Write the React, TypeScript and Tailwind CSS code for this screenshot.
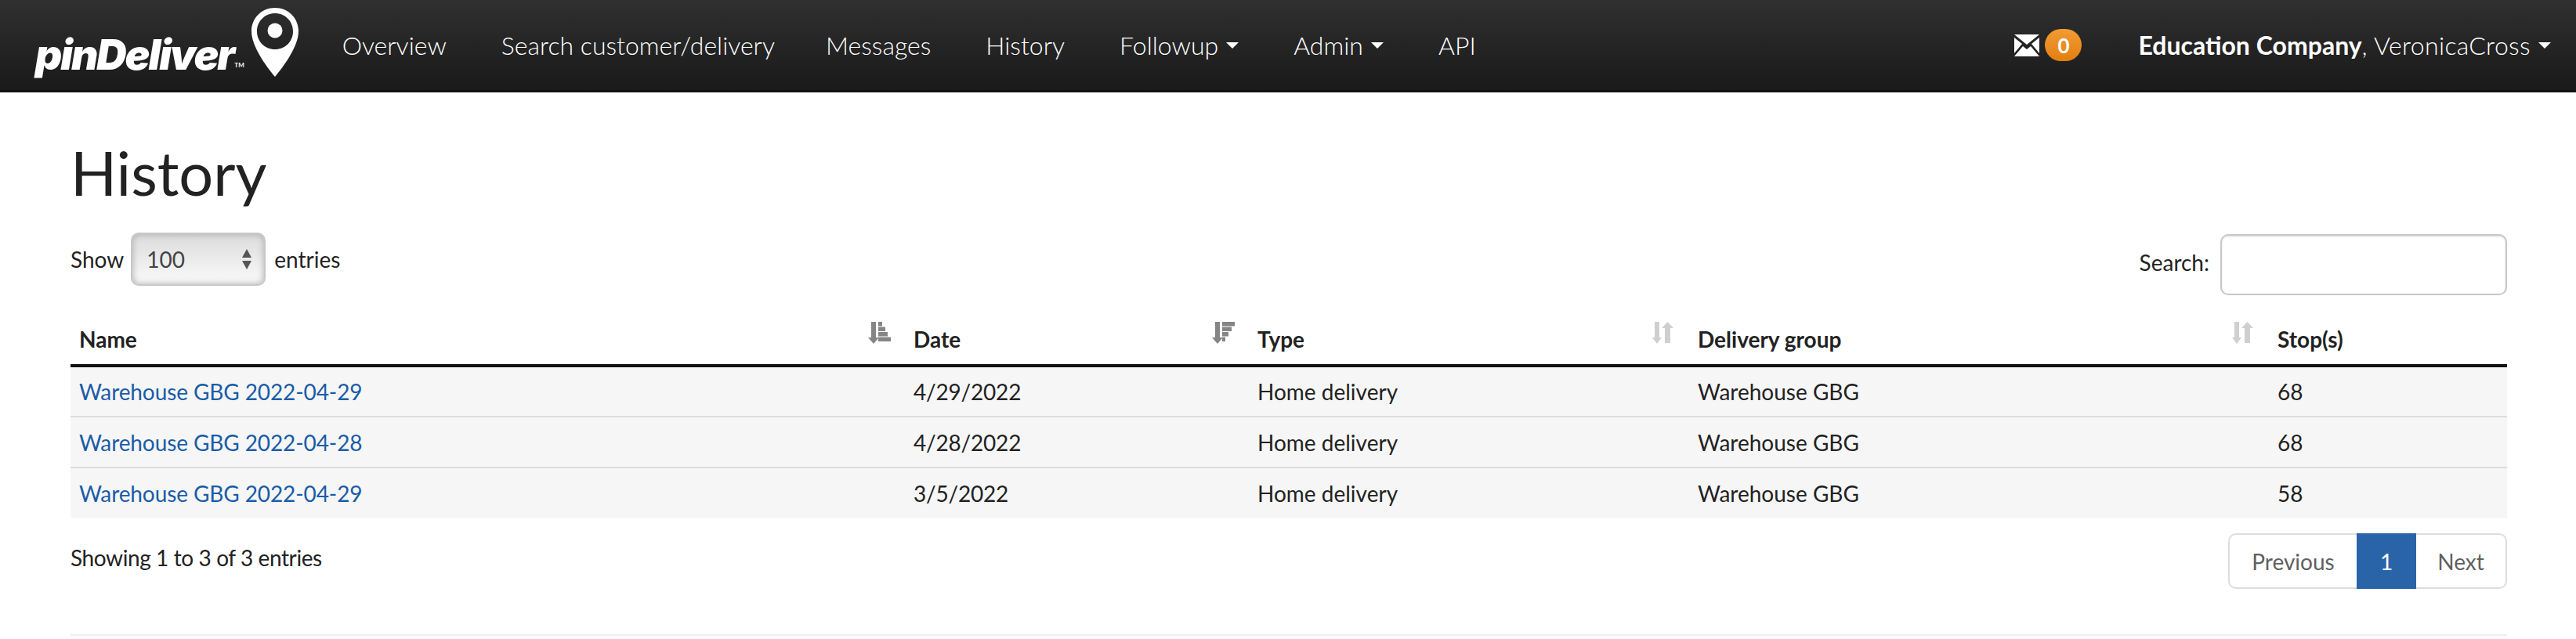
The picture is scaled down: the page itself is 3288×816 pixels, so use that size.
const LATO = "font-['Lato','Liberation_Sans',sans-serif]";

const rows = [
  { name: "Warehouse GBG 2022-04-29", date: "4/29/2022", type: "Home delivery", group: "Warehouse GBG", stops: "68" },
  { name: "Warehouse GBG 2022-04-28", date: "4/28/2022", type: "Home delivery", group: "Warehouse GBG", stops: "68" },
  { name: "Warehouse GBG 2022-04-29", date: "3/5/2022", type: "Home delivery", group: "Warehouse GBG", stops: "58" },
];

function Caret() {
  return <span className="ml-[10px] inline-block border-x-[8px] border-t-[8px] border-x-transparent border-t-white align-middle" />;
}

function NavLink({ label, caret, className = "" }: { label: string; caret?: boolean; className?: string }) {
  return (
    <a className={`flex items-center text-[32px] font-light text-white ${className}`}>
      {label}
      {caret && <Caret />}
    </a>
  );
}

function Pin() {
  return (
    <svg width="60" height="88" viewBox="0 0 60 88" className="shrink-0">
      <path
        fillRule="evenodd"
        fill="#fff"
        d="M30 0C13 0 0 13 0 30c0 19 19 45 30 58 11-13 30-39 30-58C60 13 47 0 30 0zm0 7c13 0 23 10 23 23S43 53 30 53 7 43 7 30 17 7 30 7z"
      />
      <circle cx="30" cy="29" r="9.5" fill="#fff" />
    </svg>
  );
}

function SortDesc({ flip }: { flip?: boolean }) {
  const bars = flip ? [16, 12, 8, 4] : [5, 9, 12, 16];
  return (
    <svg width="30" height="30" viewBox="0 0 30 30" fill="#858585">
      <path d="M5 1h6v20h4l-7 8-7-8h4z" />
      {bars.map((w, i) => (
        <rect key={i} x="14" y={1 + i * 6.500} width={w} height="5.500" />
      ))}
    </svg>
  );
}

function SortBoth() {
  return (
    <svg width="30" height="30" viewBox="0 0 30 30" fill="#cfcfcf">
      <path d="M4 1h6v20h3l-6 8-6-8h3z" />
      <path d="M17 28h7V9h4l-7.500-8L13 9h4z" />
    </svg>
  );
}

function Th({ label, width, icon }: { label: string; width: string; icon?: React.ReactNode }) {
  return (
    <th className={`${width} p-0 text-left align-top font-bold`}>
      <div className="flex h-[77px] items-start justify-between pl-[11px] pr-[18px]">
        <span className="mt-[25px] leading-[40px]">{label}</span>
        <span className="mt-[22px]">{icon}</span>
      </div>
    </th>
  );
}

export default function App() {
  return (
    <div className={`${LATO} h-[816px] overflow-hidden bg-white text-[28px] text-[#222]`}>
      <nav className="flex h-[118px] items-center border-b-[3px] border-[#111] bg-gradient-to-b from-[#303030] to-[#1a1a1a] pl-[45px] pr-[32px]">
        <div className="flex items-start">
          <span className="mt-[24px] font-['Inter'] text-[53px] font-black italic leading-[70px] tracking-[-2px] text-white">
            pinDeliver
          </span>
          <span className="ml-[1px] mt-[66px] text-[8px] font-bold text-white">TM</span>
          <span className="ml-[9px] mt-[-1px]"><Pin /></span>
        </div>
        <div className="ml-[56px] flex gap-[70px]">
          <NavLink label="Overview" />
          <NavLink label="Search customer/delivery" className="mr-[-5px]" />
          <NavLink label="Messages" />
          <NavLink label="History" />
          <NavLink label="Followup" caret />
          <NavLink label="Admin" caret />
          <NavLink label="API" />
        </div>
        <div className="ml-auto flex items-center">
          <svg width="32" height="28" viewBox="0 0 32 28" fill="#fff">
            <path d="M0 0h32L16 13z" />
            <path d="M0 4v20l10-12z" />
            <path d="M32 4v20L22 12z" />
            <path d="M0 28l11-13 5 4 5-4 11 13z" />
          </svg>
          <span className="ml-[7px] flex h-[41px] w-[47px] items-center justify-center rounded-full bg-gradient-to-b from-[#f19c31] to-[#e37e0e] text-[26px] font-bold leading-none text-white">
            0
          </span>
          <span className="ml-[72px] flex items-center text-[32px] font-light text-white">
            <b className="font-bold">Education Company</b>
            <span className="tracking-[0.35px]">, VeronicaCross</span>
            <Caret />
          </span>
        </div>
      </nav>

      <main className="ml-[90px] mr-[88px]">
        <h1 className="mt-[56px] text-[77.5px] font-normal leading-[94px] text-[#222]">History</h1>

        <div className="mt-[31px] flex h-[78px] items-start justify-between">
          <div className="flex h-[64px] items-center">
            Show
            <div className="ml-[9px] flex h-[68px] w-[172px] items-center justify-between rounded-[10px] border-[2px] border-[#c8c8c8] bg-gradient-to-b from-[#dcdcdc] to-[#fafafa] pl-[18px] pr-[15px] text-[#444] shadow-[inset_0_0_8px_#aaaaaa]">
              100
              <svg width="14" height="26" viewBox="0 0 14 26" fill="#555">
                <path d="M7 0l6 11H1z" />
                <path d="M1 15h12L7 26z" />
              </svg>
            </div>
            <span className="ml-[11px]">entries</span>
          </div>
          <div className="flex items-center">
            <span className="mt-[-6px]">Search:</span>
            <input className="ml-[14px] h-[78px] w-[366px] rounded-[10px] border-[2px] border-[#c8c8c8] bg-white shadow-[inset_0_1px_2px_rgba(0,0,0,0.15)]" />
          </div>
        </div>

        <table className="mt-[11px] w-full table-fixed border-collapse">
          <thead>
            <tr className="border-b-[4px] border-[#111]">
              <Th label="Name" width="w-[1065px]" icon={<SortDesc />} />
              <Th label="Date" width="w-[439px]" icon={<SortDesc flip />} />
              <Th label="Type" width="w-[562px]" icon={<SortBoth />} />
              <Th label="Delivery group" width="w-[740px]" icon={<SortBoth />} />
              <Th label="Stop(s)" width="w-[304px]" />
            </tr>
          </thead>
          <tbody>
            {rows.map((r, i) => (
              <tr key={i} className="h-[65px] border-t-[2px] border-[#ddd] bg-[#f6f6f6]">
                <td className="pl-[11px]"><a className="tracking-[-0.1px] text-[#1a5ca8]">{r.name}</a></td>
                <td className="pl-[11px] tracking-[-0.2px]">{r.date}</td>
                <td className="pl-[11px]">{r.type}</td>
                <td className="pl-[11px]">{r.group}</td>
                <td className="pl-[11px]">{r.stops}</td>
              </tr>
            ))}
          </tbody>
        </table>

        <div className="mt-[19px] flex items-start justify-between">
          <span className="mt-[10px] tracking-[-0.4px]">Showing 1 to 3 of 3 entries</span>
          <div className="flex h-[71px] items-stretch text-[#606060]">
            <a className="flex w-[164px] items-center justify-center rounded-l-[10px] border-[2px] border-r-0 border-[#ddd]">Previous</a>
            <a className="flex w-[76px] items-center justify-center bg-[#2a64a8] text-white">1</a>
            <a className="flex w-[116px] items-center justify-center rounded-r-[10px] border-[2px] border-l-0 border-[#ddd]">Next</a>
          </div>
        </div>

        <hr className="mt-[58px] border-t-[2px] border-[#eee]" />
      </main>
    </div>
  );
}
